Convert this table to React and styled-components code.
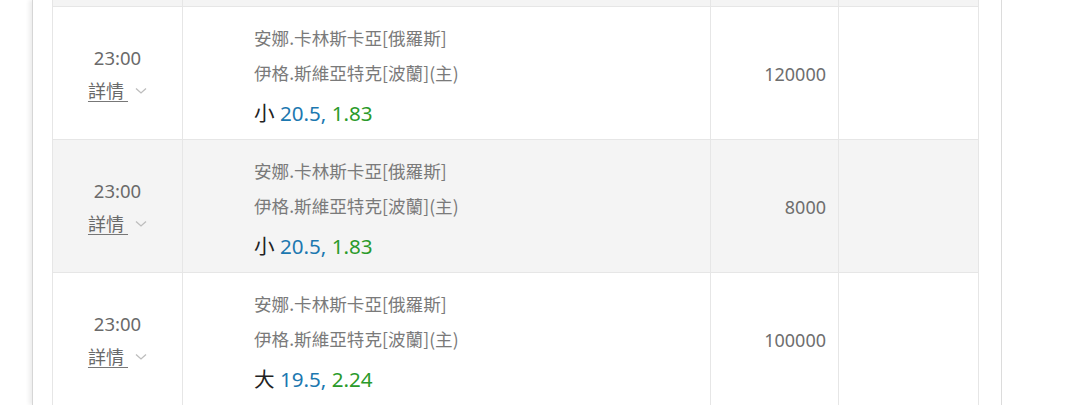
import React from "react";
import styled, { createGlobalStyle } from "styled-components";

const Global = createGlobalStyle`
  html, body { margin: 0; padding: 0; background: #fff; }
  body { font-family: "Noto Sans", "Noto Sans CJK TC", sans-serif; overflow: hidden; }
`;

const Page = styled.div`
  display: flex;
  padding-left: 32px;
  height: 405px;
  overflow: hidden;
`;

const Panel = styled.div`
  width: 970px;
  box-sizing: border-box;
  border-left: 1px solid #d6d6d6;
  border-right: 1px solid #dcdcdc;
  box-shadow: -3px 0 4px rgba(0, 0, 0, 0.07);
  padding: 0 22px 0 19px;
  background: #fff;
`;

const Table = styled.div`
  width: 927px;
  display: flex;
  flex-direction: column;
`;

const Row = styled.div`
  display: grid;
  grid-template-columns: 130px 528px 128px 141px;
  height: ${(p) => p.$h}px;
  box-sizing: border-box;
  border-bottom: 1px solid #e6e6e6;
  background: ${(p) => (p.$alt ? "#f4f4f4" : "#fff")};
`;

const Cell = styled.div`
  border-left: 1px solid #e6e6e6;
  box-sizing: border-box;
  &:last-child { border-right: 1px solid #e6e6e6; }
`;

const TimeCell = styled(Cell)`
  display: flex;
  flex-direction: column;
  align-items: center;
  justify-content: center;
  padding-top: 1px;
`;

const Time = styled.div`
  font-size: 18.5px;
  line-height: 33px;
  color: #6a6a6a;
`;

const Detail = styled.div`
  display: flex;
  align-items: center;
  line-height: 33px;
  gap: 7px;
  padding-left: 0;
`;

const DetailLink = styled.span`
  font-family: "Noto Sans CJK TC", sans-serif;
  font-size: 18px;
  color: #6a6a6a;
  text-decoration: underline;
  text-decoration-color: #777;
  text-underline-offset: 3px;
  white-space: pre;
`;

const Chevron = styled.svg`
  width: 12px;
  height: 8px;
  margin-top: 2px;
`;

const MatchCell = styled(Cell)`
  padding: 13px 0 4px 71px;
  display: flex;
  flex-direction: column;
`;

const Team = styled.div`
  font-family: "Noto Sans CJK TC", sans-serif;
  font-size: 17.6px;
  line-height: 35px;
  color: #7a7a7a;
  white-space: nowrap;
`;

const Odds = styled.div`
  font-size: 20.6px;
  line-height: 44px;
  color: #222;
  white-space: nowrap;
`;

const Side = styled.span`
  font-family: "Noto Sans CJK TC", sans-serif;
`;

const Line = styled.span`
  color: #1c78b0;
`;

const Price = styled.span`
  color: #2a9a2a;
`;

const AmountCell = styled(Cell)`
  display: flex;
  align-items: center;
  justify-content: flex-end;
  padding: 2px 12px 0 0;
  font-size: 18px;
  color: #6e6e6e;
`;

const rows = [
  { time: "23:00", side: "小", line: "20.5", price: "1.83", amount: "120000" },
  { time: "23:00", side: "小", line: "20.5", price: "1.83", amount: "8000" },
  { time: "23:00", side: "大", line: "19.5", price: "2.24", amount: "100000" },
];

export default function App() {
  return (
    <>
      <Global />
      <Page>
        <Panel>
          <Table>
            <Row $h={7} $alt>
              <Cell />
              <Cell />
              <Cell />
              <Cell />
            </Row>
            {rows.map((r, i) => (
              <Row key={i} $h={133} $alt={i % 2 === 1}>
                <TimeCell>
                  <Time>{r.time}</Time>
                  <Detail>
                    <DetailLink>{"詳情 "}</DetailLink>
                    <Chevron viewBox="0 0 12 8">
                      <polyline points="1,1.5 6,6 11,1.5" fill="none" stroke="#bdbdbd" strokeWidth="1.3" />
                    </Chevron>
                  </Detail>
                </TimeCell>
                <MatchCell>
                  <Team>安娜.卡林斯卡亞[俄羅斯]</Team>
                  <Team>伊格.斯維亞特克[波蘭](主)</Team>
                  <Odds>
                    <Side>{r.side}</Side> <Line>{r.line},</Line> <Price>{r.price}</Price>
                  </Odds>
                </MatchCell>
                <AmountCell>{r.amount}</AmountCell>
                <Cell />
              </Row>
            ))}
          </Table>
        </Panel>
      </Page>
    </>
  );
}
